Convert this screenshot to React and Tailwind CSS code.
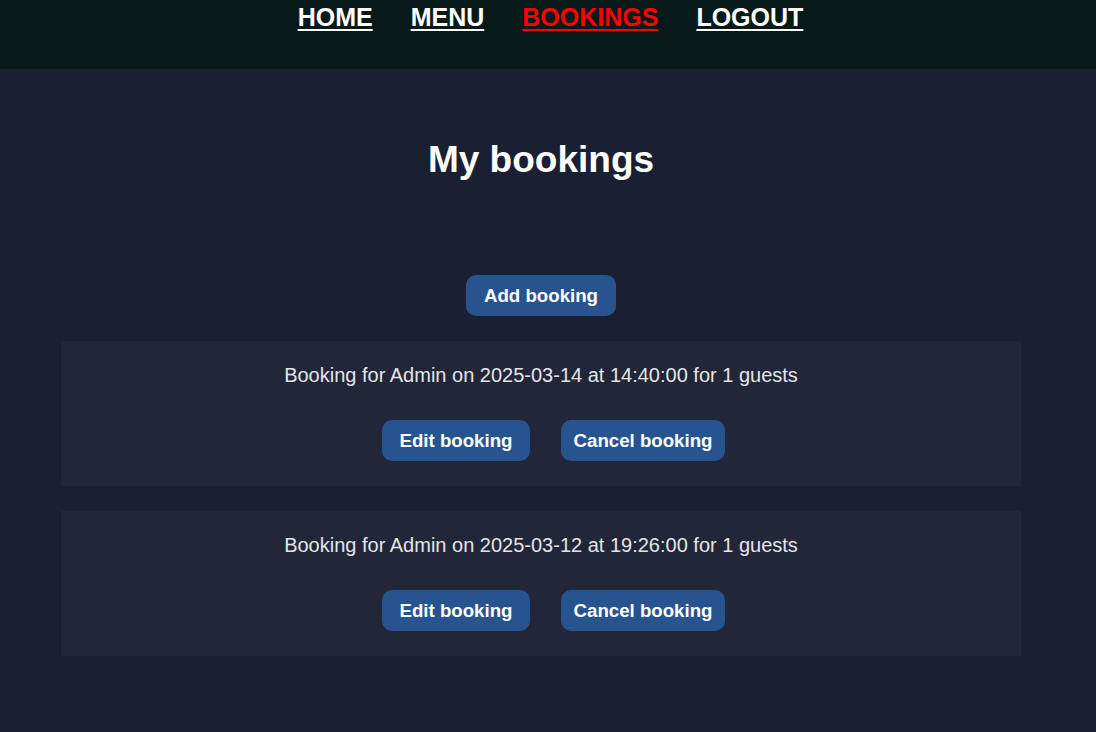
const bookings = [
  { id: 1, name: 'Admin', date: '2025-03-14', time: '14:40:00', guests: 1 },
  { id: 2, name: 'Admin', date: '2025-03-12', time: '19:26:00', guests: 1 },
]

const font = { fontFamily: '"Liberation Sans", Arial, sans-serif' }

function NavLink({ children, active }) {
  return (
    <a
      href="#"
      className={`text-[25px] font-bold underline underline-offset-[3px] decoration-[2px] leading-[29px] ${active ? 'text-[#ff0000]' : 'text-white'}`}
    >
      {children}
    </a>
  )
}

function Button({ children, width }) {
  return (
    <button
      className={`${width} h-[41px] pb-[1px] rounded-[10px] bg-[#27548f] text-white text-[18.67px] font-bold leading-[21px]`}
    >
      {children}
    </button>
  )
}

export default function App() {
  return (
    <div className="min-h-[732px] bg-[#1b1f32]" style={font}>
      {/* Header */}
      <header className="h-[69px] bg-[#071919]">
        <nav className="flex justify-center gap-[38px] pt-[3px] pl-[5px]">
          <NavLink>HOME</NavLink>
          <NavLink>MENU</NavLink>
          <NavLink active>BOOKINGS</NavLink>
          <NavLink>LOGOUT</NavLink>
        </nav>
      </header>

      <main className="w-[1082px] flex flex-col items-center pb-[60px]">
        <h1 className="mt-[70px] text-[37px] font-bold text-white leading-[42px]">My bookings</h1>

        <div className="mt-[94px]">
          <Button width="w-[150px]">Add booking</Button>
        </div>

        <div className="mt-[25px] w-[960px] flex flex-col gap-[25px]">
          {bookings.map(b => (
            <div key={b.id} className="bg-[#222639] pt-[24px] pb-[25px] flex flex-col items-center">
              <p className="text-[20px] leading-[23px] text-[#e4e4e8] -mt-[1px] mb-[1px]">
                Booking for {b.name} on {b.date} at {b.time} for {b.guests} guests
              </p>
              <div className="mt-[32px] flex gap-[31px] pl-[25px]">
                <Button width="w-[148px]">Edit booking</Button>
                <Button width="w-[164px]">Cancel booking</Button>
              </div>
            </div>
          ))}
        </div>
      </main>
    </div>
  )
}
